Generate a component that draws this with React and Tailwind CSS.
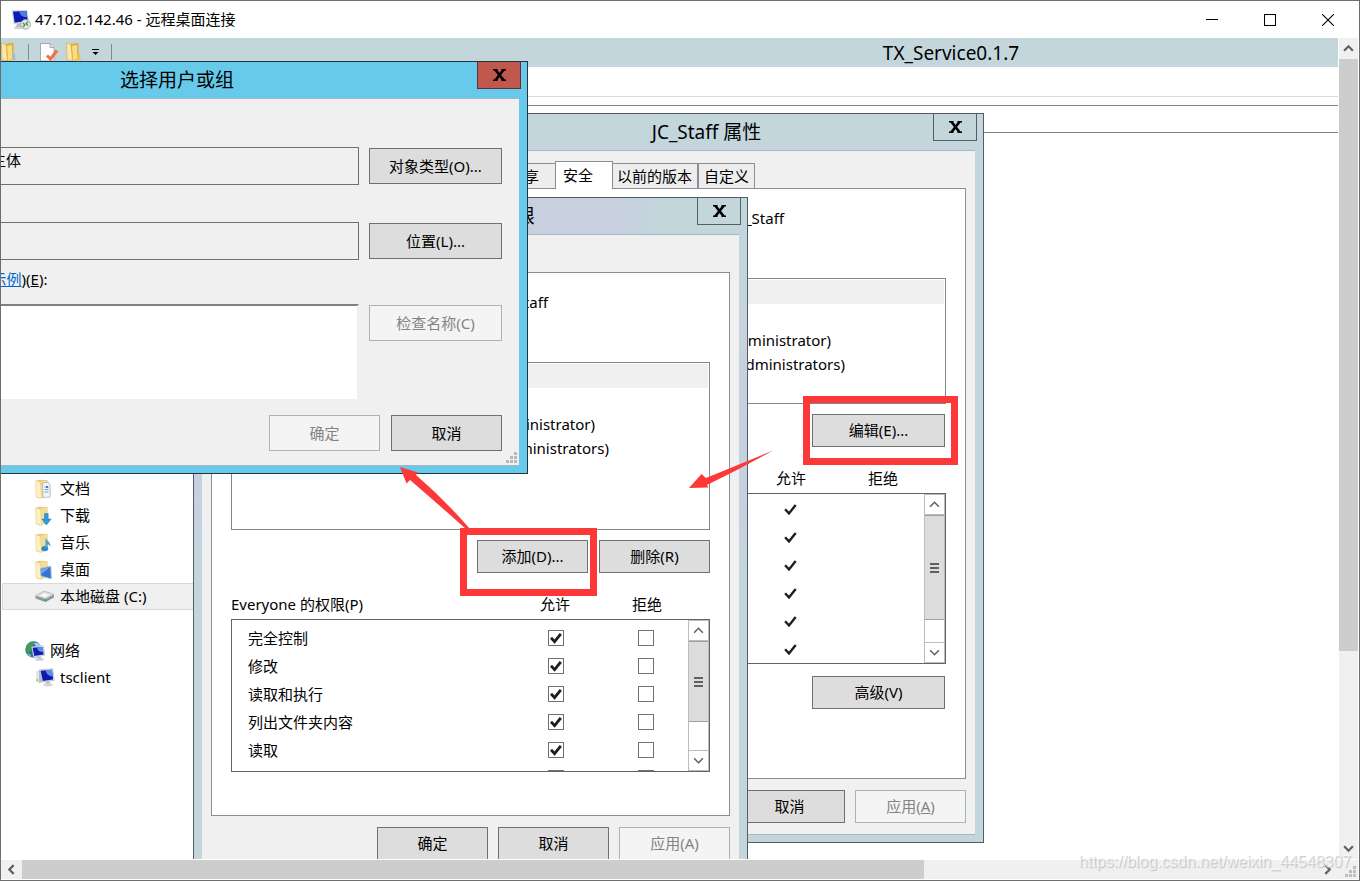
import { clsx } from 'clsx';

const treeItems = [
  { name: '文档', icon: 'doc' },
  { name: '下载', icon: 'download' },
  { name: '音乐', icon: 'music' },
  { name: '桌面', icon: 'desktop' },
];

const permissions = ['完全控制', '修改', '读取和执行', '列出文件夹内容', '读取', '写入'];

function ComputerIcon() {
  return (
    <svg width="20" height="20" viewBox="0 0 20 20" aria-hidden="true">
      <path d="M1 4 L5 2.5 L7 3 L7 14 L5 15 L1 13.5 Z" fill="#b9bec5" />
      <path d="M1 4 L4 3.4 L4 14.5 L1 13.5 Z" fill="#e2e5e9" />
      <path d="M1.5 11.5 H3 V12.8 H1.5 Z" fill="#5ab44e" />
      <path d="M4.5 1.8 L17.8 0.8 L19.2 12.4 L7 14.2 Z" fill="#dde1e8" stroke="#aab0ba" strokeWidth="0.6" />
      <path d="M5.6 2.7 L16.9 1.8 L18.1 11.6 L7.8 13 Z" fill="#0d1aac" />
      <path d="M10.5 2.3 L16.9 1.8 L17.7 8.5 Q12 8.5 10.5 2.3 Z" fill="#5b8cf0" />
      <path d="M11 13.8 L14.5 13.3 L15.5 15.8 L10.5 16.4 Z" fill="#b9bec5" />
      <ellipse cx="13" cy="16.8" rx="4.8" ry="1.6" fill="#d3d6da" />
    </svg>
  );
}

function RemoteIcon() {
  return (
    <svg width="20" height="20" viewBox="0 0 20 20" aria-hidden="true">
      <path d="M1 0.8 L16 0.4 L17.5 11.5 L3 14 Z" fill="#dfe3ea" stroke="#b8bec8" strokeWidth="0.5" />
      <path d="M2 1.4 L15.5 1 L16.7 10.8 L3.6 12.8 Z" fill="#0d1cae" />
      <path d="M8 1.2 L15.5 1 L16.2 7 Q10 8 8 1.2 Z" fill="#4c7ce8" />
      <path d="M6 13.8 L10 13.2 L12 17 L4 18 Z" fill="#b9bec5" />
      <ellipse cx="8" cy="17.8" rx="5" ry="1.4" fill="#ced2d7" />
      <circle cx="14.6" cy="14.4" r="4.8" fill="#e6e8e9" stroke="#9a9ea2" strokeWidth="0.9" />
      <path d="M12 13 L13.8 14.8 L12.2 17 M17 11.8 L15.2 13.6 L17 15.6" fill="none" stroke="#3c9a3c" strokeWidth="1.4" />
    </svg>
  );
}

function FolderIcon({ kind }) {
  return (
    <svg width="18" height="20" viewBox="0 0 18 20" aria-hidden="true">
      <path d="M2 2 L5 0.8 L13.5 1 L13.5 17 L6 19.5 L2 18 Z" fill="#e6cb78" />
      <path d="M7 2.5 L13.5 1 L14 15 L7 19 Z" fill="#f3dd98" />
      <path d="M1.5 1.5 L6.5 3.5 L7.5 19.5 L2 17.8 Z" fill="#fcefc0" stroke="#e3cb85" strokeWidth="0.5" />
      {kind === 'doc' && (
        <g>
          <path d="M8.5 4 L14 3 L16 5.5 L16.2 18 L9 18.5 Z" fill="#f2f5f9" stroke="#9aa8b5" strokeWidth="0.7" />
          <path d="M10.5 8 H14.5 M10.5 10.5 H14.5 M10.5 13 H14.5" stroke="#7d9bbd" strokeWidth="1" />
          <path d="M12 7 h2 v2 h-2z" fill="#477fb8" />
        </g>
      )}
      {kind === 'download' && (
        <path d="M10.5 7.5 H14.2 V13 H17.2 L12.4 19 L7.8 13 H10.5 Z" fill="#2b9be0" stroke="#1c78b8" strokeWidth="0.5" />
      )}
      {kind === 'music' && (
        <g>
          <ellipse cx="10.8" cy="15.6" rx="3.4" ry="2.7" fill="#2f86c8" />
          <path d="M11.5 15 V5 C13 8 17 9 16.4 14 C15.6 12 14.4 11.4 13.6 11.2 V15.5 Z" fill="#4a9fdb" />
        </g>
      )}
      {kind === 'desktop' && (
        <g>
          <path d="M6.5 8.5 L16.8 6.2 L17.3 18.8 L7 16 Z" fill="#3576cc" stroke="#a9bccf" strokeWidth="0.9" />
          <path d="M7.2 9 L16.2 7 L7.5 14 Z" fill="#6fa8ea" />
        </g>
      )}
    </svg>
  );
}

function OpenFolderIcon({ className, accent }) {
  return (
    <svg className={className} width="18" height="20" viewBox="0 0 18 20" aria-hidden="true">
      <path d="M4 2 L12.5 0.8 L12.5 14 L15 17.5 L8 18.5 L4 18 Z" fill="#dcae3c" />
      <path d="M6 4 L11 3 L11 17 L7 18.5 Z" fill="#f6dd86" />
      <path d="M0.5 1 L5 2.4 L6.5 19 L1 17.5 Z" fill="#fbe9a6" stroke="#d3a93c" strokeWidth="0.6" />
      <path d="M11 12 H14 V18 L11 18 Z" fill={accent} />
    </svg>
  );
}

function DriveIcon() {
  return (
    <svg width="20" height="13" viewBox="0 0 20 13" aria-hidden="true">
      <path d="M0.5 6 L9 1 L19 4.5 L19 7.5 L10.5 12 L0.5 8.5 Z" fill="#949698" />
      <path d="M0.5 5.8 L9 1 L19 4.3 L10.5 9 Z" fill="#dcdedf" stroke="#a6a8aa" strokeWidth="0.5" />
      <path d="M5 5.6 L9.5 3.2 L14.5 4.8 L10 7.2 Z" fill="#f8f8f8" />
      <path d="M9 9.4 L11.5 9.4 L11.5 11.6 L9 11 Z" fill="#3fb54a" />
    </svg>
  );
}

function NetworkIcon() {
  return (
    <svg width="20" height="20" viewBox="0 0 20 20" aria-hidden="true">
      <circle cx="8.5" cy="8.5" r="8.2" fill="#2d6fb6" />
      <path d="M1.6 4.5 Q5 0 10 0.8 L8 4.5 L6 6 L6.5 9 L3.5 12 L0.8 10 Z" fill="#43a047" />
      <path d="M9 2 Q14 1 15.8 5.4 L11 5.6 Z" fill="#9bd4ea" />
      <path d="M3 12 L6 14 L6 16.5 Q3.5 15 2 13 Z" fill="#6cc46a" />
      <path d="M6.6 5.8 L18.6 4.8 L19.8 14.4 L8.6 16.2 Z" fill="#e3e6ea" stroke="#aeb4bd" strokeWidth="0.5" />
      <path d="M7.6 6.8 L17.7 5.9 L18.7 13.5 L9.3 15 Z" fill="#0f1eb0" />
      <path d="M12 6.4 L17.7 5.9 L18.3 11 Q13.4 11.4 12 6.4 Z" fill="#5c8df2" />
      <path d="M12.5 15.6 L15.5 15.2 L16.5 17.5 L12 18 Z" fill="#b9bec5" />
      <ellipse cx="14.5" cy="18.4" rx="4.6" ry="1.4" fill="#cdd1d6" />
    </svg>
  );
}

function Check({ size, weight = 2.2, className }) {
  return (
    <svg className={className} width={size} height={size} viewBox="0 0 12 12" aria-hidden="true">
      <path d="M1 5.8 L4.6 9.6 L10.8 1.8" fill="none" stroke="#1e1e1e" strokeWidth={weight} />
    </svg>
  );
}

function Chevron({ direction = 'up', size = 11, weight = 2 }) {
  const paths = {
    up: 'M1 7 L5 3 L9 7',
    down: 'M1 3 L5 7 L9 3',
    left: 'M7 1 L3 5 L7 9',
    right: 'M3 1 L7 5 L3 9',
  };
  return (
    <svg width={size} height={size} viewBox="0 0 10 10" aria-hidden="true">
      <path d={paths[direction]} fill="none" stroke="#606060" strokeWidth={weight} />
    </svg>
  );
}

function Grip({ color = '#b8b8b8', className }) {
  return (
    <svg className={className} width="11" height="11" viewBox="0 0 11 11" fill={color} aria-hidden="true">
      <path d="M8 0h3v3h-3zM4 4h3v3h-3zM8 4h3v3h-3zM0 8h3v3h-3zM4 8h3v3h-3zM8 8h3v3h-3z" />
    </svg>
  );
}

function Button({ disabled, className, children }) {
  return (
    <button
      type="button"
      disabled={disabled}
      className={clsx(
        'shrink-0 border text-center whitespace-nowrap',
        disabled ? 'border-[#adb2b5] bg-[#f4f4f4] text-[#838383]' : 'border-[#707070] bg-[#dddddd] text-black',
        className
      )}
    >
      {children}
    </button>
  );
}

function DialogWindow({ title, active, tinted, className, children }) {
  return (
    <section
      className={clsx(
        'absolute isolate border px-2 pb-[7px]',
        active ? 'border-[#27333b] bg-[#67caea]' : 'border-[#545c66] bg-[#c3d6dc]',
        tinted && 'bg-linear-to-b from-[#c3d6dc] via-[#c6d0df] via-40% to-[#c3d6dc] to-60%',
        className
      )}
    >
      <header
        className={clsx(
          '-mx-2 flex h-9 items-start justify-center px-2',
          tinted && 'bg-linear-to-r from-[#c6d0df] from-79% to-[#c3d6dc] to-83%'
        )}
      >
        <h2 className="text-[19px] leading-9">{title}</h2>
        <button
          type="button"
          aria-label="关闭"
          className={clsx(
            'absolute top-0 right-[6px] flex h-[27px] w-11 items-center justify-center border border-t-0',
            active ? 'border-[#5c3336] bg-[#c1584d]' : 'border-[#545c66] bg-[#c3d6dc]'
          )}
        >
          <svg width="13" height="12" viewBox="0 0 13 12" aria-hidden="true">
            <path d="M2.2 0.5 L10.8 11.5 M10.8 0.5 L2.2 11.5" stroke="#000" strokeWidth="2.6" />
            <path d="M0 0.7 H4.5 M8.5 0.7 H13 M0 11.3 H4.5 M8.5 11.3 H13" stroke="#000" strokeWidth="1.4" />
          </svg>
        </button>
      </header>
      <div className="relative border-y border-[#a9b5c1] bg-[#f0f0f0]">{children}</div>
    </section>
  );
}

function Tab({ active, className, children }) {
  return (
    <button
      type="button"
      className={clsx(
        'border border-b-0 border-[#8c8e96] text-left whitespace-nowrap',
        active ? 'relative z-10 -mx-[2px] -mb-px h-7 w-[58px] bg-white pl-[7px]' : 'h-[25px] bg-[#ededed] pl-[5px]',
        className
      )}
    >
      {children}
    </button>
  );
}

function ListScrollbar({ thumb }) {
  return (
    <div className="flex w-[21px] shrink-0 flex-col border-x border-[#bcbcbc] bg-white">
      <button type="button" aria-label="向上滚动" className="flex h-[21px] items-center justify-center border-y border-[#bcbcbc]">
        <Chevron direction="up" weight={1.4} />
      </button>
      <div className={clsx('flex flex-col items-center justify-center gap-[2px] border-y border-[#a0a0a0] bg-[#dcdcdc]', thumb)}>
        <span className="h-[2px] w-[9px] bg-[#606060]" />
        <span className="h-[2px] w-[9px] bg-[#606060]" />
        <span className="h-[2px] w-[9px] bg-[#606060]" />
      </div>
      <div className="flex-1" />
      <button type="button" aria-label="向下滚动" className="flex h-[21px] items-center justify-center border-y border-[#bcbcbc]">
        <Chevron direction="down" weight={1.4} />
      </button>
    </div>
  );
}

// Object name and the list of groups, the same in both security sheets
function GroupList({ className }) {
  return (
    <>
      <p className="mt-[17px] -ml-5 w-[337px] text-right leading-6">JC_Staff</p>
      <div className={clsx('mt-12 border border-[#828790] p-px', className)}>
        <div className="h-6 bg-[#f0f0f0]" />
        <ul className="w-[376px] pt-6 text-right leading-6">
          <li className="pr-[14px]">Administrator)</li>
          <li>Administrators)</li>
        </ul>
      </div>
    </>
  );
}

function PermissionHeading({ children }) {
  return (
    <div className="mt-[19px] mb-[3px] flex h-6 leading-6">
      <span className="w-[309px]">{children}</span>
      <span className="w-[92px]">允许</span>
      <span>拒绝</span>
    </div>
  );
}

function PropertiesWindow() {
  return (
    <DialogWindow title="JC_Staff 属性" className="top-[75px] left-[428px] w-[555px]">
      <div className="px-[9px] pb-[11px]">
        <nav className="flex h-[37px] items-end pl-[56px]">
          <Tab className="w-[54px]">共享</Tab>
          <Tab active>安全</Tab>
          <Tab className="w-[87px]">以前的版本</Tab>
          <Tab className="w-[57px]">自定义</Tab>
        </nav>
        <div className="border border-[#8c8e96] bg-white px-[19px] pb-[69px]">
          <GroupList className="h-[126px]" />
          <Button className="mt-[10px] mr-px ml-auto block h-[33px] w-[133px]">编辑(E)...</Button>
          <PermissionHeading />
          <div className="flex h-[171px] overflow-hidden border border-[#646464]">
            <ul className="flex-1 pt-px pl-[316px]">
              {permissions.map((name) => (
                <li key={name} aria-label={name} className="flex h-7 items-center">
                  <Check size={13} />
                </li>
              ))}
            </ul>
            <ListScrollbar thumb="h-[105px]" />
          </div>
          <Button className="mt-3 mr-px ml-auto block h-[33px] w-[133px]">高级(V)</Button>
        </div>
        <footer className="mt-[11px] flex justify-end gap-[10px]">
          <Button className="h-[33px] w-[111px]">确定</Button>
          <Button className="h-[33px] w-[111px]">取消</Button>
          <Button disabled className="h-[33px] w-[111px]">
            应用(<u>A</u>)
          </Button>
        </footer>
      </div>
    </DialogWindow>
  );
}

function PermissionBox({ label, checked }) {
  return (
    <span className="relative block size-4">
      <input
        type="checkbox"
        aria-label={label}
        defaultChecked={checked}
        className="peer block size-4 appearance-none border border-[#707070] bg-white"
      />
      <Check size={12} weight={2.8} className="pointer-events-none absolute top-[2px] left-[2px] hidden peer-checked:block" />
    </span>
  );
}

function PermissionsWindow() {
  return (
    <DialogWindow title="JC_Staff 的权限" tinted className="top-[159px] left-[192px] w-[555px]">
      <div className="px-[9px] pb-[11px]">
        <nav className="flex h-[37px] items-end pl-[2px]">
          <Tab active>安全</Tab>
        </nav>
        <div className="border border-[#8c8e96] bg-white px-[19px] pb-[43px]">
          <GroupList className="h-[168px]" />
          <div className="mt-[10px] flex justify-end gap-[11px]">
            <Button className="h-[33px] w-[111px]">添加(D)...</Button>
            <Button className="h-[33px] w-[111px]">删除(R)</Button>
          </div>
          <PermissionHeading>Everyone 的权限(P)</PermissionHeading>
          <div className="flex h-[153px] overflow-hidden border border-[#646464]">
            <div className="flex-1 overflow-hidden pt-1">
              <table className="w-full table-fixed border-collapse">
                <tbody>
                  {permissions.map((name) => (
                    <tr key={name} className="h-7">
                      <td className="w-[316px] p-0 pl-4">{name}</td>
                      <td className="w-[90px] p-0">
                        <PermissionBox label={`${name} 允许`} checked={name !== '写入'} />
                      </td>
                      <td className="p-0">
                        <PermissionBox label={`${name} 拒绝`} />
                      </td>
                    </tr>
                  ))}
                </tbody>
              </table>
            </div>
            <ListScrollbar thumb="h-[81px]" />
          </div>
        </div>
        <footer className="mt-[11px] flex justify-end gap-[10px]">
          <Button className="h-[33px] w-[111px]">确定</Button>
          <Button className="h-[33px] w-[111px]">取消</Button>
          <Button disabled className="h-[33px] w-[111px]">应用(A)</Button>
        </footer>
      </div>
    </DialogWindow>
  );
}

function SelectWindow() {
  return (
    <DialogWindow title="选择用户或组" active className="top-[23px] -left-[175px] w-[702px]">
      <form className="px-[17px] pt-12 pb-[14px]">
        <div className="flex items-center gap-[10px]">
          <textarea
            readOnly
            aria-label="对象类型"
            defaultValue="用户、组或内置安全主体"
            className="h-[38px] flex-1 resize-none overflow-hidden border border-[#707070] bg-transparent px-[3px] leading-6 outline-none"
          />
          <Button className="h-9 w-[133px]">对象类型(O)...</Button>
        </div>
        <div className="mt-[37px] flex items-center gap-[10px]">
          <input
            readOnly
            aria-label="位置"
            className="h-[38px] flex-1 border border-[#707070] bg-transparent px-[3px] outline-none"
          />
          <Button className="h-9 w-[133px]">位置(L)...</Button>
        </div>
        <label htmlFor="object-names" className="mt-[7px] block leading-6">
          输入对象名称来选择(
          <a href="#examples" className="text-[#0066cc] underline">示例</a>
          )(<u>E</u>):
        </label>
        <div className="mt-[13px] flex items-start gap-[10px]">
          <textarea
            id="object-names"
            className="h-[97px] flex-1 resize-none border-2 border-t-[#808080] border-r-[#f0f0f0] border-b-[#f0f0f0] border-l-[#808080] bg-white outline-none"
          />
          <Button disabled className="mt-px h-9 w-[133px]">检查名称(C)</Button>
        </div>
        <footer className="mt-[14px] flex justify-end gap-[11px]">
          <Button disabled className="h-9 w-[111px]">确定</Button>
          <Button className="h-9 w-[111px]">取消</Button>
        </footer>
      </form>
      <Grip className="absolute right-[2px] bottom-[2px]" />
    </DialogWindow>
  );
}

function Explorer() {
  return (
    <div className="text-black">
      <div className="relative h-[29px] bg-[#c3d6dc]">
        <div className="flex w-[1900px] justify-center text-[19px] leading-[30px]">TX_Service0.1.7</div>
        <div className="absolute top-1 left-0 flex items-start">
          <OpenFolderIcon className="mr-[9px]" accent="#a9bac0" />
          <span className="mt-[2px] mr-[10px] h-4 w-px bg-[#7c8b92]" />
          <svg className="mr-[7px]" width="20" height="20" viewBox="0 0 20 20" aria-hidden="true">
            <path d="M1.5 1.5 H11 L15 5.5 V19 H1.5 Z" fill="#fdfdfd" stroke="#a5a9ad" />
            <path d="M11 1.5 V5.5 H15" fill="#e4e6e8" stroke="#a5a9ad" />
            <path d="M8 13.5 L11.5 17 L18 8.5" fill="none" stroke="#ee7240" strokeWidth="3" />
          </svg>
          <OpenFolderIcon className="mr-2" accent="#efc447" />
          <svg className="mt-[7px] mr-3" width="7" height="7" viewBox="0 0 7 7" aria-hidden="true">
            <path d="M0 0 H7 V1 H0 Z M0.5 3 H6.5 L3.5 6 Z" fill="#000" />
          </svg>
          <span className="mt-[2px] h-4 w-px bg-[#7c8b92]" />
        </div>
      </div>
      <div className="h-[30px] border-b border-[#dadbdc]" />
      <div className="h-[9px] border-b border-[#808080]" />
      <div className="h-[27px] border-b border-[#808080]" />
      <ul className="w-[192px] pt-[342px]">
        {treeItems.map((item) => (
          <li key={item.name} className="flex h-[27px] items-center gap-2 pl-[33px]">
            <FolderIcon kind={item.icon} />
            {item.name}
          </li>
        ))}
        <li className="ml-px flex h-[27px] items-center gap-[5px] border border-r-0 border-[#d9d9d9] bg-[#f0f0f0] pl-8">
          <DriveIcon />
          本地磁盘 (C:)
        </li>
        <li className="mt-[27px] flex h-[27px] items-center gap-[5px] pl-6">
          <NetworkIcon />
          网络
        </li>
        <li className="flex h-[27px] items-center gap-[5px] pl-[34px]">
          <ComputerIcon />
          tsclient
        </li>
      </ul>
    </div>
  );
}

function Annotations() {
  return (
    <svg className="pointer-events-none absolute inset-0 size-full" aria-hidden="true">
      <g transform="translate(-1 -38)">
        <rect x="806.5" y="399.5" width="148" height="62" fill="none" stroke="#fc3938" strokeWidth="7" />
        <rect x="463.5" y="531.5" width="130" height="61" fill="none" stroke="#fc3938" strokeWidth="7" />
        <path d="M689 488 L701.5 474 L706 478 Q740 464 773 450.5 Q742 468 707 485 L708.5 487.5 Z" fill="#fc3938" />
        <path d="M400 467 L418 472.5 L416 475 Q445 500 470 529 L466 529 Q438 504 410 480 L406.5 483.5 Z" fill="#fc3938" />
      </g>
    </svg>
  );
}

export default function App() {
  return (
    <div className="relative flex h-screen flex-col overflow-hidden border border-[#6e6e6e] bg-white font-['Noto_Sans','Noto_Sans_CJK_SC',sans-serif] text-[15px] text-black">
      {/* Title bar */}
      <header className="flex h-[37px] shrink-0 items-center pr-[2px]">
        <div className="flex flex-1 items-center gap-1 pl-[10px]">
          <RemoteIcon />
          <h1>47.102.142.46 - 远程桌面连接</h1>
        </div>
        <button type="button" aria-label="最小化" className="flex h-full w-[58px] items-center justify-center">
          <span className="h-px w-3 bg-black" />
        </button>
        <button type="button" aria-label="最大化" className="flex h-full w-[58px] items-center justify-center">
          <span className="size-3 border border-black" />
        </button>
        <button type="button" aria-label="关闭" className="flex h-full w-[58px] items-center justify-center">
          <svg width="12" height="12" viewBox="0 0 12 12" aria-hidden="true">
            <path d="M0 0 L12 12 M12 0 L0 12" stroke="#000" strokeWidth="1.1" />
          </svg>
        </button>
      </header>

      <div className="flex min-h-0 flex-1">
        {/* Remote desktop */}
        <main className="relative min-w-0 flex-1 overflow-hidden">
          <Explorer />
          <PropertiesWindow />
          <PermissionsWindow />
          <SelectWindow />
          <Annotations />
        </main>
        <div className="mx-px flex w-[19px] flex-col bg-[#f0f0f0]">
          <button type="button" aria-label="向上滚动" className="flex h-[21px] items-center justify-center">
            <Chevron direction="up" />
          </button>
          <div className="flex-[592] bg-[#cdcdcd]" />
          <div className="flex-[187]" />
          <button type="button" aria-label="向下滚动" className="flex h-[21px] items-center justify-center">
            <Chevron direction="down" />
          </button>
        </div>
      </div>

      <div className="my-px mr-px flex h-[19px] shrink-0 bg-[#f0f0f0]">
        <button type="button" aria-label="向左滚动" className="flex w-[21px] items-center justify-center">
          <Chevron direction="left" />
        </button>
        <div className="flex-[902] bg-[#cdcdcd]" />
        <div className="flex-[393]" />
        <button type="button" aria-label="向右滚动" className="flex w-[21px] items-center justify-center">
          <Chevron direction="right" />
        </button>
        <div className="flex w-5 items-end justify-end p-[2px]">
          <Grip color="#bfbfbf" />
        </div>
      </div>

      <p className="pointer-events-none absolute right-2 bottom-2 font-['Liberation_Sans',Arial,sans-serif] text-base leading-5 text-white/60 [text-shadow:1px_1px_1px_#bdbdbd]">
        https://blog.csdn.net/weixin_44548307
      </p>
    </div>
  );
}
